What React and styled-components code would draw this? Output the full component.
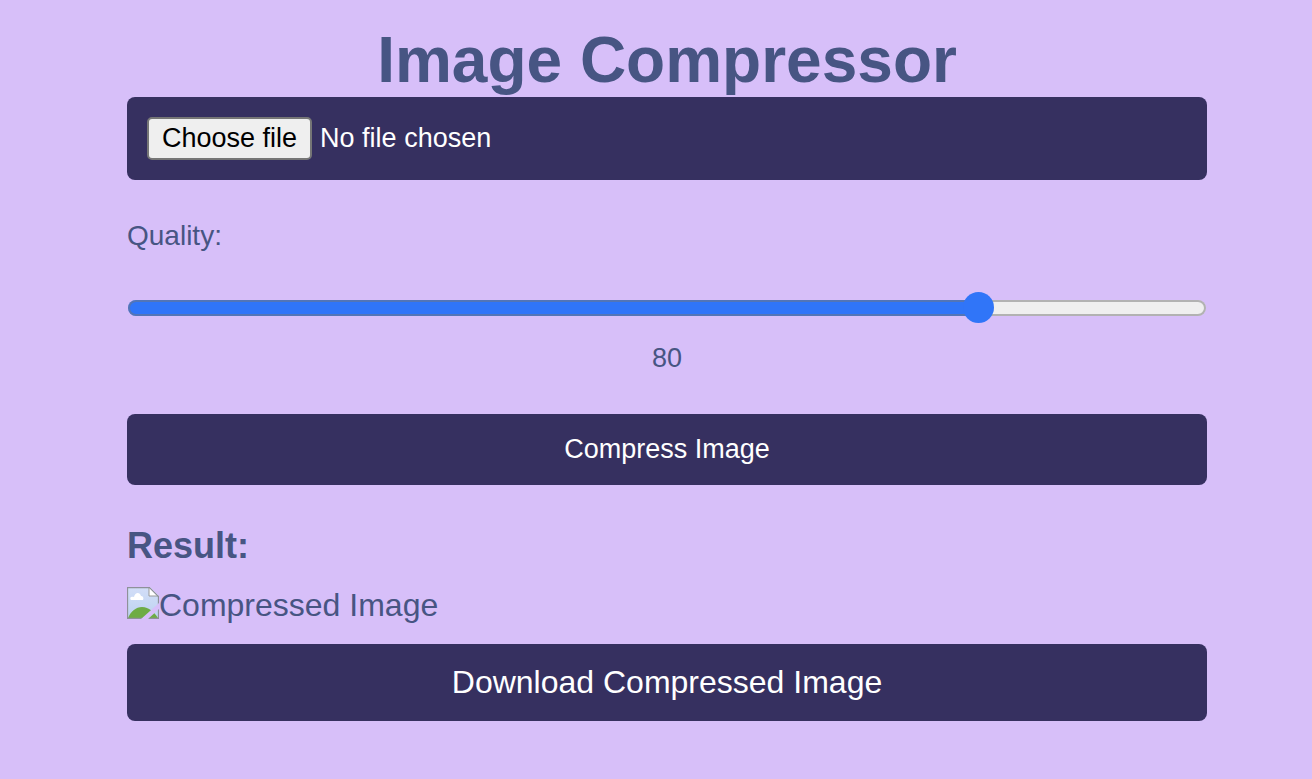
import React, { useState, useRef } from "react";
import styled, { createGlobalStyle } from "styled-components";

const GlobalStyle = createGlobalStyle`
  *, *::before, *::after { box-sizing: border-box; }
  body {
    margin: 0;
    background: #d7bff9;
    color: #475583;
    font-family: "Liberation Sans", Arial, sans-serif;
    font-size: 32px;
  }
`;

const Page = styled.main`
  display: flex;
  flex-direction: column;
  max-width: 1120px;
  margin: 0 auto;
  padding: 24px 9px 24px 31px;
`;

const Title = styled.h1`
  margin: 0;
  text-align: center;
  font-size: 64px;
  line-height: 73px;
`;

const FileBar = styled.div`
  display: flex;
  align-items: center;
  gap: 8px;
  padding: 20px;
  border-radius: 8px;
  background: #363060;
  color: #fff;
  font-size: 27px;
  line-height: 31px;
`;

const FileInput = styled.input`
  display: none;
`;

const FileButton = styled.button`
  padding: 4px 13px;
  border: 2px solid #767676;
  border-radius: 5px;
  background: #efefef;
  color: #000;
  font: inherit;
`;

const QualityLabel = styled.label`
  margin-top: 40px;
  font-size: 28px;
  line-height: 32px;
`;

const Slider = styled.input`
  appearance: none;
  height: 32px;
  margin: 40px 1px 0;
  background: transparent;

  &::-webkit-slider-runnable-track {
    height: 16px;
    border-radius: 8px;
    background: linear-gradient(to right, #3075f8 var(--fill), #efefef var(--fill));
    box-shadow: inset 0 0 0 2px rgba(118, 118, 118, 0.5);
  }

  &::-webkit-slider-thumb {
    appearance: none;
    width: 31px;
    height: 31px;
    margin-top: -8px;
    border-radius: 50%;
    background: #3075f8;
  }
`;

const QualityValue = styled.output`
  margin-top: 18px;
  text-align: center;
  font-size: 27px;
  line-height: 32px;
`;

const CompressButton = styled.button`
  margin-top: 40px;
  padding: 20px;
  border: 0;
  border-radius: 8px;
  background: #363060;
  color: #fff;
  font: inherit;
  font-size: 27px;
  line-height: 31px;
`;

const ResultTitle = styled.h2`
  margin: 40px 0 0;
  font-size: 36px;
  line-height: 42px;
`;

const Preview = styled.div`
  display: flex;
  align-items: flex-start;
  margin-top: 20px;
  line-height: 37px;
`;

const DownloadLink = styled.a`
  margin-top: 20px;
  padding: 20px;
  border-radius: 8px;
  background: #363060;
  color: #fff;
  text-align: center;
  text-decoration: none;
  line-height: 37px;
`;

function BrokenImageIcon() {
  return (
    <svg width="32" height="32" viewBox="0 0 32 32" aria-hidden="true">
      <defs>
        <linearGradient id="sky" x1="0" y1="0" x2="0" y2="1">
          <stop offset="0" stopColor="#d3def8" />
          <stop offset="1" stopColor="#bcd2f0" />
        </linearGradient>
        <clipPath id="sheet">
          <path d="M0 0H23L32 9V16L14 32H0ZM32 22V32H21Z" />
        </clipPath>
      </defs>
      <g clipPath="url(#sheet)">
        <path d="M0 0H32V32H0Z" fill="url(#sky)" />
        <path d="M1 31C4 24 9 20 15 20C22 20 27 25 31 31Z" fill="#6eac45" />
        <path d="M4 13C2 10 5 9 7 10C8 5 13 5 14 9C16 9 17 11 16 13Z" fill="#fff" />
        <path d="M22 0L32 9H22Z" fill="#fff" />
        <path d="M22 1V9H32" fill="none" stroke="#999" strokeWidth="1" />
        <path d="M.5 .5H22.500L31.500 9.500V31.500H.5Z" fill="none" stroke="#8e9199" strokeWidth="1.300" />
      </g>
    </svg>
  );
}

const MIN_QUALITY = 1;
const MAX_QUALITY = 100;

export default function App() {
  const [quality, setQuality] = useState(80);
  const [fileName, setFileName] = useState("No file chosen");
  const picker = useRef(null);

  return (
    <Page>
      <GlobalStyle />
      <Title>Image Compressor</Title>
      <FileBar>
        <FileInput
          ref={picker}
          type="file"
          accept="image/*"
          aria-label="Image file"
          onChange={(e) => setFileName(e.target.files[0]?.name ?? "No file chosen")}
        />
        <FileButton type="button" onClick={() => picker.current.click()}>Choose file</FileButton>
        <span>{fileName}</span>
      </FileBar>
      <QualityLabel htmlFor="quality">Quality:</QualityLabel>
      <Slider
        id="quality"
        type="range"
        min={MIN_QUALITY}
        max={MAX_QUALITY}
        value={quality}
        style={{ "--fill": `${((quality - MIN_QUALITY) / (MAX_QUALITY - MIN_QUALITY)) * 100}%` }}
        onChange={(e) => setQuality(Number(e.target.value))}
      />
      <QualityValue htmlFor="quality">{quality}</QualityValue>
      <CompressButton type="button">Compress Image</CompressButton>
      <ResultTitle>Result:</ResultTitle>
      <Preview>
        <BrokenImageIcon />
        <span>Compressed Image</span>
      </Preview>
      <DownloadLink href="#download">Download Compressed Image</DownloadLink>
    </Page>
  );
}
